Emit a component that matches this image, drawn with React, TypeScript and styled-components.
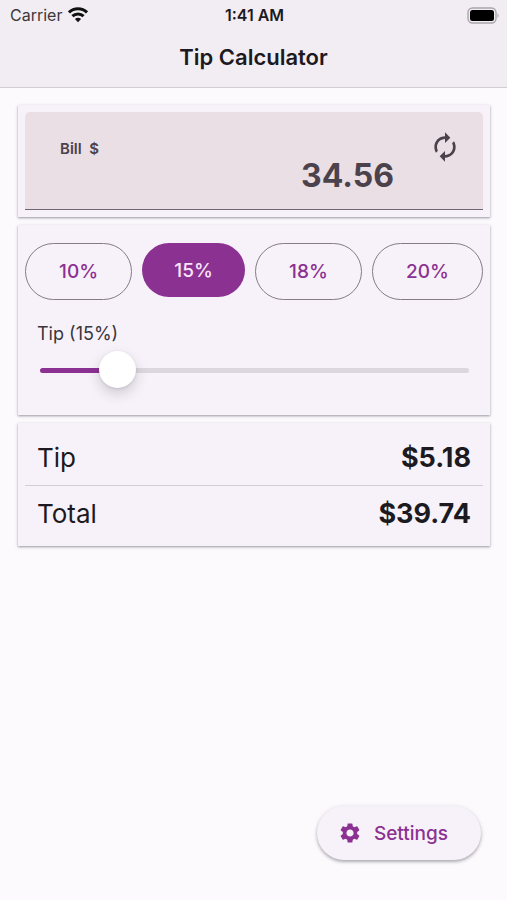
import React, { useState } from "react";
import styled, { createGlobalStyle, css } from "styled-components";
import { MdAutorenew, MdSettings } from "react-icons/md";

const purple = "#8b3192";
const surface = "#f7f2f9";
const ink = "#1c1a20";

const GlobalStyle = createGlobalStyle`
  *, *::before, *::after { box-sizing: border-box; }
  body { margin: 0; background: #fdfafe; }
  button, input { font-family: inherit; }
`;

const Screen = styled.div`
  display: flex;
  flex-direction: column;
  min-height: 100vh;
  background: #fdfafe;
  color: ${ink};
  font-family: Inter, "Liberation Sans", sans-serif;
`;

const Header = styled.header`
  background: #f2edf3;
  border-bottom: 1px solid #d2cdd3;
`;

const StatusBar = styled.div`
  display: grid;
  grid-template-columns: 1fr auto 1fr;
  align-items: center;
  height: 30px;
  padding: 0 8px 0 10px;
  font-size: 16px;
`;

const Carrier = styled.span`
  display: flex;
  align-items: center;
  gap: 6px;
  color: #3b383e;
`;

const Clock = styled.time`
  font-weight: 600;
`;

const Battery = styled.svg`
  justify-self: end;
`;

const Title = styled.h1`
  margin: 0;
  padding: 6px 0 8px;
  font-size: 22px;
  line-height: 43px;
  font-weight: 600;
  text-align: center;
`;

const Main = styled.main`
  display: flex;
  flex-direction: column;
  gap: 8px;
  padding: 17px 17px 16px 18px;
`;

const Card = styled.section<{ $pad: string }>`
  padding: ${(p) => p.$pad};
  background: ${surface};
  box-shadow: 0 1px 2px rgba(40, 35, 50, 0.36), 0 1px 4px rgba(40, 35, 50, 0.14);
`;

const BillField = styled.div`
  display: grid;
  grid-template-columns: auto 1fr 32px;
  column-gap: 35px;
  height: 98px;
  padding: 19px 22px 0 35px;
  border-bottom: 1px solid #6f6670;
  border-radius: 5px 5px 0 0;
  background: #e9dfe5;
  color: #4c424b;
`;

const BillLabel = styled.label`
  padding-top: 8px;
  font-size: 15px;
  line-height: 20px;
  font-weight: 600;
  white-space: pre;
`;

const BillInput = styled.input`
  align-self: start;
  width: 100%;
  min-width: 0;
  height: 40px;
  margin-top: 24px;
  padding: 0;
  border: 0;
  outline: 0;
  background: transparent;
  color: inherit;
  font-size: 32px;
  font-weight: 700;
  text-align: right;
`;

const IconButton = styled.button`
  display: flex;
  width: 32px;
  height: 32px;
  padding: 0;
  border: 0;
  background: transparent;
  color: inherit;
  cursor: pointer;
`;

const Choices = styled.div`
  display: flex;
  align-items: flex-start;
  gap: 10px;
`;

const Choice = styled.button<{ $active: boolean }>`
  flex: 1 1 auto;
  height: 57px;
  padding: 0 30px;
  border: 1px solid #857c86;
  border-radius: 29px;
  background: transparent;
  color: ${purple};
  font-size: 19px;
  font-weight: 500;
  cursor: pointer;
  ${(p) =>
    p.$active &&
    css`
      height: 54px;
      padding: 0 29px;
      border: 0;
      background: ${purple};
      color: #f9e4fa;
    `}
`;

const SliderBlock = styled.div`
  display: flex;
  flex-direction: column;
  padding: 22px 14px 0 12px;
`;

const SliderLabel = styled.label`
  font-size: 18px;
  line-height: 24px;
  color: #39353c;
`;

const Slider = styled.input<{ $value: number }>`
  --fill: calc(18px + (100% - 36px) * ${(p) => p.$value / 100});
  appearance: none;
  height: 38px;
  margin: 5px 0 1px 3px;
  background: transparent;
  cursor: pointer;

  &::-webkit-slider-runnable-track {
    height: 5px;
    border-radius: 3px;
    background: linear-gradient(to right, ${purple} var(--fill), #dcd6de var(--fill));
  }

  &::-webkit-slider-thumb {
    appearance: none;
    width: 37px;
    height: 37px;
    margin-top: -17px;
    border-radius: 50%;
    background: #fff;
    box-shadow: 0 6px 13px rgba(40, 30, 50, 0.18), 0 1px 3px rgba(40, 30, 50, 0.12);
  }
`;

const Totals = styled.dl`
  margin: 0;
`;

const TotalRow = styled.div`
  display: flex;
  align-items: center;
  justify-content: space-between;
  height: 55px;
  padding: 0 12px;
  font-size: 26px;

  & + & {
    border-top: 1px solid #d3ced5;
  }
`;

const Amount = styled.dd`
  margin: 0;
  font-size: 27px;
  font-weight: 700;
`;

const Footer = styled.footer`
  display: flex;
  justify-content: flex-end;
  margin-top: auto;
  padding: 0 26px 40px;
`;

const SettingsButton = styled.button`
  display: flex;
  align-items: center;
  gap: 12px;
  height: 54px;
  padding: 0 33px 0 21px;
  border: 0;
  border-radius: 27px;
  background: ${surface};
  box-shadow: 0 2px 3px rgba(40, 35, 50, 0.28), 0 1px 5px rgba(40, 35, 50, 0.14);
  color: ${purple};
  font-size: 19px;
  font-weight: 500;
  cursor: pointer;
`;

const rates = [10, 15, 18, 20];
const money = (n: number) => `$${(Math.floor(n * 100 + 1e-6) / 100).toFixed(2)}`;

export default function App() {
  const [bill, setBill] = useState("34.56");
  const [rate, setRate] = useState(15);
  const amount = Number(bill) || 0;
  const tip = (amount * rate) / 100;

  return (
    <>
      <GlobalStyle />
      <Screen>
        <Header>
          <StatusBar>
            <Carrier>
              Carrier
              <svg width="20" height="16" viewBox="0 0 20 16" fill="none" stroke="#111" strokeWidth="3" aria-hidden="true">
                <path d="M1 5.4C6 .4 14 .4 19 5.4" />
                <path d="M4.4 9.2c3.2-3.1 8-3.1 11.2 0" />
                <path d="M10 15.2 6.9 11.9c1.8-1.6 4.4-1.6 6.2 0Z" fill="#111" stroke="none" />
              </svg>
            </Carrier>
            <Clock>1:41 AM</Clock>
            <Battery width="32" height="17" viewBox="0 0 32 17" role="img" aria-label="Battery full">
              <rect x="1" y="1" width="28" height="15" rx="4.5" fill="none" stroke="#a9a5aa" strokeWidth="1.4" />
              <rect x="3" y="3" width="24" height="11" rx="2.5" fill="#000" />
              <path d="M30.5 6.2c1.5.7 1.5 3.9 0 4.6Z" fill="#a9a5aa" />
            </Battery>
          </StatusBar>
          <Title>Tip Calculator</Title>
        </Header>
        <Main>
          <Card $pad="7px">
            <BillField>
              <BillLabel htmlFor="bill">{"Bill  $"}</BillLabel>
              <BillInput id="bill" inputMode="decimal" value={bill} onChange={(e) => setBill(e.target.value)} />
              <IconButton type="button" aria-label="Clear bill" onClick={() => setBill("")}>
                <MdAutorenew size={32} />
              </IconButton>
            </BillField>
          </Card>
          <Card $pad="18px 7px 25px">
            <Choices>
              {rates.map((r) => (
                <Choice key={r} type="button" $active={r === rate} aria-pressed={r === rate} onClick={() => setRate(r)}>
                  {r}%
                </Choice>
              ))}
            </Choices>
            <SliderBlock>
              <SliderLabel htmlFor="rate">Tip ({rate}%)</SliderLabel>
              <Slider id="rate" type="range" min={0} max={100} value={rate} $value={rate} onChange={(e) => setRate(Number(e.target.value))} />
            </SliderBlock>
          </Card>
          <Card $pad="7px 7px 6px">
            <Totals>
              <TotalRow>
                <dt>Tip</dt>
                <Amount>{money(tip)}</Amount>
              </TotalRow>
              <TotalRow>
                <dt>Total</dt>
                <Amount>{money(amount + tip)}</Amount>
              </TotalRow>
            </Totals>
          </Card>
        </Main>
        <Footer>
          <SettingsButton type="button">
            <MdSettings size={24} />
            Settings
          </SettingsButton>
        </Footer>
      </Screen>
    </>
  );
}
